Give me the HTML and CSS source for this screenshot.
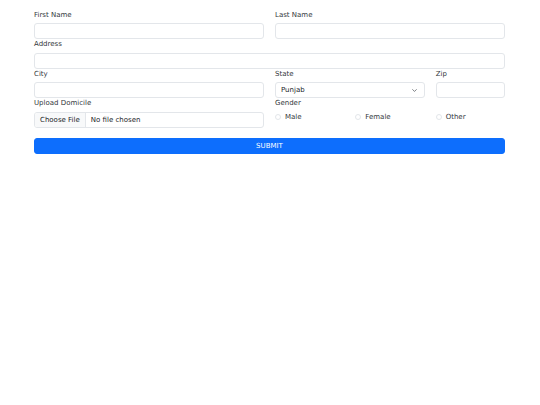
FILE: index.html
```html
<!DOCTYPE html>
<html lang="en">
<head>
<meta charset="utf-8">
<title>Form</title>
<link rel="stylesheet" href="styles.css">
</head>
<body>
<form class="form">
  <div class="field span6">
    <label class="label" for="fn">First Name</label>
    <input class="control" id="fn" type="text">
  </div>
  <div class="field span6">
    <label class="label" for="ln">Last Name</label>
    <input class="control" id="ln" type="text">
  </div>
  <div class="field span12">
    <label class="label" for="ad">Address</label>
    <input class="control" id="ad" type="text">
  </div>
  <div class="field span6">
    <label class="label" for="ci">City</label>
    <input class="control" id="ci" type="text">
  </div>
  <div class="field span4">
    <label class="label" for="st">State</label>
    <div class="select-wrap">
      <select class="control select" id="st">
        <option>Punjab</option>
      </select>
      <svg class="chevron" viewBox="0 0 16 16" width="5" height="5"><path d="M2 5l6 6 6-6" fill="none" stroke="#343a40" stroke-width="2" stroke-linecap="round" stroke-linejoin="round"/></svg>
    </div>
  </div>
  <div class="field span2">
    <label class="label" for="zp">Zip</label>
    <input class="control" id="zp" type="text">
  </div>
  <div class="field span6">
    <label class="label" for="fl">Upload Domicile</label>
    <input class="control file" id="fl" type="file">
  </div>
  <div class="field span6">
    <span class="label">Gender</span>
    <div class="radios">
      <label class="radio"><input type="radio" name="g" class="radio-input"><span>Male</span></label>
      <label class="radio"><input type="radio" name="g" class="radio-input"><span>Female</span></label>
      <label class="radio"><input type="radio" name="g" class="radio-input"><span>Other</span></label>
    </div>
  </div>
  <div class="span12 submit-row">
    <button class="submit" type="button">SUBMIT</button>
  </div>
</form>
</body>
</html>
```
FILE: styles.css
```css
html, body {
  margin: 0;
  padding: 0;
  background: #fff;
}
body {
  font-family: "DejaVu Sans", sans-serif;
  color: #212529;
}
.form {
  width: 471px;
  margin: 0 0 0 34px;
  padding-top: 9.5px;
  display: grid;
  grid-template-columns: repeat(12, 1fr);
  column-gap: 11px;
}
.span12 { grid-column: span 12; }
.span6 { grid-column: span 6; }
.span4 { grid-column: span 4; }
.span2 { grid-column: span 2; }
.field {
  display: flex;
  flex-direction: column;
  min-width: 0;
}
.label {
  display: block;
  font-size: 7px;
  line-height: 10.5px;
  margin-bottom: 3px;
  color: #33373b;
}
.control {
  display: block;
  box-sizing: border-box;
  width: 100%;
  height: 16px;
  margin: 0;
  padding: 0 6px;
  border: 1px solid #e3e6ea;
  border-radius: 3px;
  background: #fff;
  font-family: "DejaVu Sans", sans-serif;
  font-size: 7px;
  color: #212529;
  outline: none;
}
.select-wrap {
  position: relative;
  height: 16px;
}
.select {
  appearance: none;
  -webkit-appearance: none;
  padding-left: 5px;
}
.chevron {
  position: absolute;
  right: 8px;
  top: 6px;
}
.file {
  padding: 0;
  line-height: 14px;
  overflow: hidden;
}
.file::file-selector-button {
  height: 14px;
  margin: 0 5px 0 0;
  padding: 0 5px;
  border: 0;
  border-right: 1px solid #e3e6ea;
  border-radius: 0;
  background: #f8f9fa;
  color: #212529;
  font-family: "DejaVu Sans", sans-serif;
  font-size: 7px;
}
.radios {
  display: grid;
  grid-template-columns: repeat(3, 1fr);
  column-gap: 11px;
}
.radio {
  display: flex;
  align-items: center;
  gap: 4px;
  font-size: 7px;
  line-height: 10px;
  color: #33373b;
}
.radio-input {
  appearance: none;
  -webkit-appearance: none;
  width: 6px;
  height: 6px;
  margin: 0;
  border: 1px solid #e3e6ea;
  border-radius: 50%;
  background: #fff;
  box-sizing: border-box;
}
.submit-row {
  padding-top: 10px;
}
.submit {
  display: block;
  width: 100%;
  height: 16px;
  margin: 0;
  padding: 0;
  border: 1px solid #0d6efd;
  border-radius: 3px;
  background: #0d6efd;
  color: #fff;
  font-family: "DejaVu Sans", sans-serif;
  font-size: 7px;
}
```
